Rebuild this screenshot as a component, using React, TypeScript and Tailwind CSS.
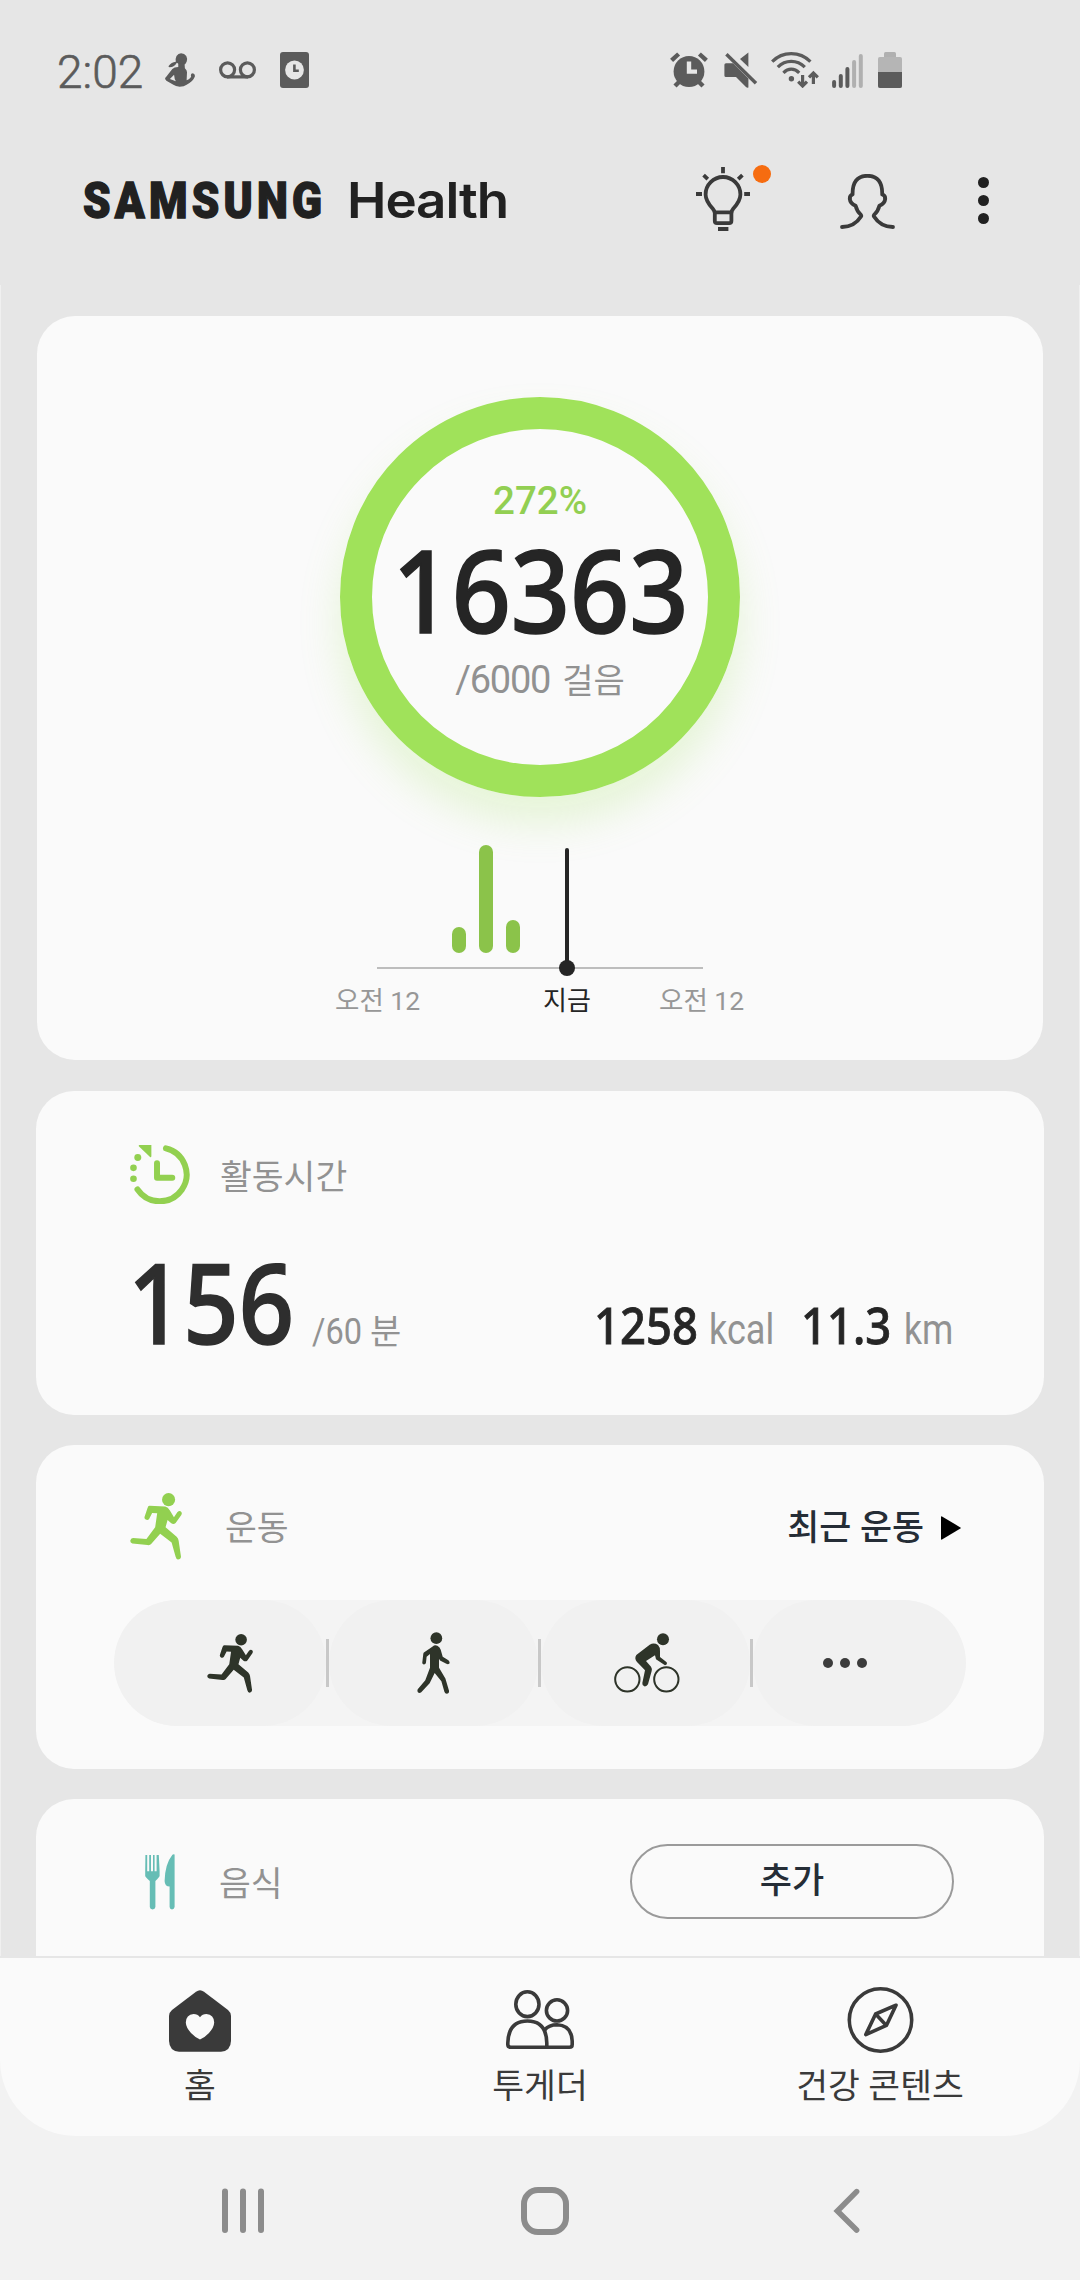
import React from "react";

interface IconProps {
  className?: string;
}

interface StepBar {
  id: number;
  height: number;
}

const stepBars: StepBar[] = [
  { id: 1, height: 26 },
  { id: 2, height: 108 },
  { id: 3, height: 33 },
];

/* Status bar icons */

function CoachIcon({ className }: IconProps) {
  return (
    <svg viewBox="0 0 86 102" preserveAspectRatio="none" className={className} fill="currentColor">
      <path d="M46 1Q56 1 61 9Q65 16 62 26Q60 34 52 36Q40 36 34 29Q28 41 13 43Q8 41 11 38Q18 27 31 26Q29 18 33 9Q38 1 46 1Z" />
      <path
        fillRule="evenodd"
        d="M38 31L56 31L57 46Q64 52 63 60L62 82Q73 78 75 70Q72 61 80 61Q88 64 85 72Q80 86 62 95Q55 101 42 101Q30 100 24 95L4 83Q-3 77 3 72L21 48Q26 42 38 42ZM26 65L14 78L31 85Q27 78 26 65Z"
      />
    </svg>
  );
}

function VoicemailIcon({ className }: IconProps) {
  return (
    <svg viewBox="0 0 37 18" className={className} fill="none" stroke="currentColor" strokeWidth="3.2">
      <circle cx="8.6" cy="8.8" r="7" />
      <circle cx="28.4" cy="8.8" r="7" />
      <path d="M8 15.9H29" />
    </svg>
  );
}

function ClockAppIcon({ className }: IconProps) {
  return (
    <svg viewBox="0 0 29 36" className={className}>
      <rect width="29" height="36" rx="3" fill="#5b5b5b" />
      <circle cx="14.5" cy="18" r="9.4" fill="#e6e6e6" />
      <path d="M14.4 12.5V18.7H18.8" fill="none" stroke="#5b5b5b" strokeWidth="2.6" />
    </svg>
  );
}

function AlarmIcon({ className }: IconProps) {
  return (
    <svg viewBox="0 0 38 36" className={className}>
      <g stroke="#5b5b5b" strokeWidth="4.4">
        <path d="M1.6 8.4L8.6 2" />
        <path d="M36.4 8.4L29.4 2" />
        <path d="M5 34L10 29" />
        <path d="M33 34L28 29" />
      </g>
      <circle cx="19" cy="19.5" r="15.4" fill="#5b5b5b" />
      <path d="M19 9.4V19.6H27" fill="none" stroke="#e6e6e6" strokeWidth="4.4" />
    </svg>
  );
}

function MuteIcon({ className }: IconProps) {
  return (
    <svg viewBox="0 0 34 36" className={className} fill="#5b5b5b">
      <path d="M24.4 0.5V15L16 7Z" />
      <path d="M2 11.2H9L24.4 26.5V35.6Q23 36 22 35L12 25H2Q0.4 25 0.4 23.5V12.8Q0.4 11.2 2 11.2Z" />
      <path d="M2.4 2.2L32 31.2" stroke="#5b5b5b" strokeWidth="3.4" />
    </svg>
  );
}

function WifiIcon({ className }: IconProps) {
  return (
    <svg viewBox="0 0 48 36" className={className} fill="none" stroke="#5b5b5b" strokeWidth="3.2">
      <path d="M1.2 9.6Q9 1.6 20.2 1.6Q31.5 1.6 39.4 9.6" />
      <path d="M6.8 15.2Q12.5 9.3 20.2 9.3Q28 9.3 33.8 15.2" />
      <path d="M12.4 20.8Q16 17.2 20.2 17.2Q24.6 17.2 28.2 20.8" />
      <circle cx="20.4" cy="26.8" r="2.7" fill="#5b5b5b" stroke="none" />
      <path d="M31.6 23V34M27.2 29.6L31.6 34L36 29.6" />
      <path d="M42.4 32V21M38 25.4L42.4 21L46.8 25.4" />
    </svg>
  );
}

function SignalIcon({ className }: IconProps) {
  return (
    <svg viewBox="0 0 31 34" className={className} strokeWidth="4" strokeLinecap="round">
      <g stroke="#5b5b5b">
        <path d="M2.1 28V32" />
        <path d="M8.8 22V32" />
        <path d="M15.4 15V32" />
      </g>
      <g stroke="#b0b0b0">
        <path d="M22.1 8V32" />
        <path d="M28.8 2V32" />
      </g>
    </svg>
  );
}

function BatteryIcon({ className }: IconProps) {
  return (
    <svg viewBox="0 0 24 36" className={className}>
      <rect x="6" width="12" height="8" rx="1.6" fill="#b0b0b0" />
      <rect y="5" width="24" height="31" rx="1.8" fill="#b5b5b5" />
      <path d="M0 20H24V34Q24 36 22 36H2Q0 36 0 34Z" fill="#5b5b5b" />
    </svg>
  );
}

/* App bar icons */

function BulbIcon({ className }: IconProps) {
  return (
    <svg viewBox="0 0 54 64" className={className} fill="none" stroke="#3a3a3a" strokeWidth="3.8">
      <path d="M18.8 45.4Q18.2 43.6 16.4 41.2Q9.6 33.5 9.6 27.4A17.4 17.4 0 0 1 44.4 27.4Q44.4 33.5 37.6 41.2Q35.8 43.6 35.4 45.4Z" />
      <path d="M18.8 45V54Q18.8 56.2 21 56.2H33.2Q35.4 56.2 35.4 54V45" />
      <path d="M22 62H32.4M27 0V6.2M0 27H6M48.2 27H54M7.6 8.2L11.8 12.2M46.4 8.2L42.2 12.2" />
    </svg>
  );
}

function ProfileIcon({ className }: IconProps) {
  return (
    <svg
      viewBox="0 0 55 55"
      className={className}
      fill="none"
      stroke="#3a3a3a"
      strokeWidth="3.8"
      strokeLinecap="round"
      strokeLinejoin="round"
    >
      <path d="M2 53Q14.5 53 21 42.6Q21.6 41.6 20.8 40.6Q17 37.5 15.6 31.8Q10.2 29.4 9.8 25Q9.6 21.4 12.6 20.4Q12.2 1.8 27.4 1.8Q42.6 1.8 42.2 20.4Q45.4 21.4 45.2 25Q44.8 29.4 39.4 31.8Q38 37.5 34.2 40.6Q33.4 41.6 34 42.6Q40.5 53 53 53" />
    </svg>
  );
}

/* Card icons */

function ActiveTimeIcon({ className }: IconProps) {
  return (
    <svg viewBox="0 0 180 178" className={className} fill="#92d050">
      <path
        d="M108 10A81 81 0 1 1 22 134"
        fill="none"
        stroke="#92d050"
        strokeWidth="18"
        strokeLinecap="round"
      />
      <path d="M81 55V99H127" fill="none" stroke="#92d050" strokeWidth="18" strokeLinecap="round" strokeLinejoin="round" />
      <path d="M28 0H64V34Q63 38 60 36L26 4Q25 0 28 0Z" />
      <circle cx="23" cy="38" r="10.5" />
      <circle cx="10" cy="69" r="10" />
      <circle cx="10" cy="102" r="10" />
    </svg>
  );
}

function RunIcon({ className }: IconProps) {
  return (
    <svg viewBox="0 0 155 199" className={className} fill="currentColor">
      <circle cx="115" cy="19.5" r="19.5" />
      <path d="M58 38L105 40Q113 42 119 52L131 72L141 57Q148 50 153 56Q156 60 153 65L136 89Q130 95 123 90L112 80L106 102L139 130Q144 135 145 142L152 190Q151 198 143 198Q138 198 136 190L124 147L90 121L63 152Q60 156 52 155L7 150Q0 147 1 141Q2 135 9 134L49 137L75 102L81 60L66 59L57 77Q53 82 47 79Q43 77 43 72L52 45Q54 38 58 38Z" />
    </svg>
  );
}

function WalkIcon({ className }: IconProps) {
  return (
    <svg viewBox="0 0 97 185" className={className} fill="currentColor">
      <circle cx="57" cy="18.5" r="17.5" />
      <path d="M46 43Q52 38 60 41Q68 45 70 53L76 74L93 84Q98 89 96 94Q92 98 87 95L68 85L65 80L65 107L84 139L95 176Q95 184 88 184Q83 184 81 178L72 147L52 122L37 153L12 180Q6 184 2 180Q-1 175 2 170L24 144L38 107L38 66L28 74L26 92Q25 97 20 97Q15 97 15 92L18 66Q18 62 22 60Z" />
    </svg>
  );
}

function CycleIcon({ className }: IconProps) {
  return (
    <svg viewBox="0 0 198 180" className={className} fill="currentColor">
      <circle cx="147" cy="19" r="18" />
      <path d="M67 66L107 35Q120 28 132 36Q139 43 138 55L138 72L158 88Q161 95 153 97L126 79L123 67L96 84L111 101Q115 107 113 114L102 154Q98 161 91 160Q84 158 85 150L93 112L69 87Q60 76 67 66Z" />
      <g fill="none" stroke="currentColor" strokeWidth="6">
        <circle cx="40" cy="139" r="36.5" />
        <circle cx="157" cy="139" r="36.5" />
      </g>
    </svg>
  );
}

function FoodIcon({ className }: IconProps) {
  return (
    <svg viewBox="0 0 30 56" className={className} fill="#66bdb5">
      <path d="M0.4 1H2.2V17.2H4.2V1H6V17.2H8V1H9.6V17.2H11.6V1H13.8L14.6 17V22Q14.4 23 10.4 27V53Q10.2 55.4 7.6 55.4Q5 55.4 4.8 53V27Q0.4 23 0.2 22V17Z" />
      <path d="M29.6 0.4V53Q29.2 55.4 27 55.4Q24.8 55.4 24.6 53V32.6Q19.8 32.6 19.6 27Q20 10 27.4 0.8Q28.4 -0.2 29.6 0.4Z" />
    </svg>
  );
}

/* Tab icons */

function HomeIcon({ className }: IconProps) {
  return (
    <svg viewBox="0 0 62 62" className={className}>
      <path
        d="M27 1.8Q31 -1.2 35 1.8L59 20Q62 22.6 62 26V51Q61.6 61 52 61.8H10Q0.4 61 0 51V26Q0 22.6 3 20Z"
        fill="#3a3a3a"
      />
      <path
        d="M31 27.2Q33.4 24 37.4 24Q45 24.6 45.2 32.6Q45 37.6 40 43Q36.4 47 31 49.4Q25.6 47 22 43Q17 37.6 16.8 32.6Q17 24.6 24.6 24Q28.6 24 31 27.2Z"
        fill="#fafafa"
      />
    </svg>
  );
}

function TogetherIcon({ className }: IconProps) {
  return (
    <svg viewBox="0 0 68 60" className={className} fill="none" stroke="#3a3a3a" strokeWidth="3.6" strokeLinejoin="round">
      <ellipse cx="21.4" cy="14.2" rx="11.6" ry="12.4" />
      <circle cx="51" cy="20.4" r="10.6" />
      <path d="M1.8 53Q2.4 31 21.4 31Q40.4 31 40.8 53V57.2H4.6Q1.8 57.2 1.8 54.6Z" />
      <path d="M38.6 40Q43 34.8 51 34.8Q65.6 35.4 66.2 51V54.4Q66.2 57.2 63.4 57.2H40" />
    </svg>
  );
}

function CompassIcon({ className }: IconProps) {
  return (
    <svg viewBox="0 0 67 66" className={className} fill="none" stroke="#3a3a3a" strokeWidth="3.6" strokeLinejoin="round">
      <circle cx="33.5" cy="33" r="31.2" />
      <path d="M49 18.2L28.6 27L18.8 47.6L39.4 38.4Z" />
      <path d="M28.6 27L39.4 38.4" />
    </svg>
  );
}

function StatusBar() {
  return (
    <div className="flex h-[140px] items-center pl-[57px] text-[#5b5b5b]">
      <span className="w-[108px] pt-1 text-[46px] leading-none font-light [-webkit-text-stroke:0.6px_#5b5b5b]">
        2:02
      </span>
      <CoachIcon className="h-[34px] w-[30px]" />
      <VoicemailIcon className="ml-6 h-[18px] w-[37px]" />
      <ClockAppIcon className="ml-6 h-9 w-[29px]" />
      <AlarmIcon className="ml-[361px] h-9 w-[38px]" />
      <MuteIcon className="ml-4 h-9 w-[34px]" />
      <WifiIcon className="ml-[13px] h-9 w-12" />
      <SignalIcon className="mt-0.5 ml-[13px] h-[34px] w-[31px]" />
      <BatteryIcon className="ml-[15px] h-9 w-6" />
    </div>
  );
}

function AppBar() {
  return (
    <header className="flex h-[145px] items-start pl-[83px] text-[#212121]">
      <h1 className="flex w-[613px] items-baseline pt-[31px] leading-[60px] whitespace-nowrap">
        <span className="w-[264px]">
          <span className="inline-block origin-left scale-x-[0.88] text-[50px] font-black tracking-[4.8px] [-webkit-text-stroke:1.4px_#212121]">
            SAMSUNG
          </span>
        </span>
        <span className="inline-block origin-left scale-x-[1.08] font-['Inter',sans-serif] text-[49px] font-semibold tracking-[-1px]">
          Health
        </span>
      </h1>
      <button className="relative mt-[27px]">
        <BulbIcon className="h-16 w-[54px]" />
        <span className="absolute -top-[2px] left-[57px] size-[18px] rounded-full bg-[#f66c10]" />
      </button>
      <button className="mt-[34px] ml-[90px]">
        <ProfileIcon className="h-[55px] w-[55px]" />
      </button>
      <button className="mt-[37px] ml-[83px] flex flex-col gap-[7px]">
        <span className="size-[11px] rounded-full bg-[#212121]" />
        <span className="size-[11px] rounded-full bg-[#212121]" />
        <span className="size-[11px] rounded-full bg-[#212121]" />
      </button>
    </header>
  );
}

function StepsCard() {
  return (
    <section className="mx-px flex h-[744px] flex-col items-center rounded-[38px] bg-[#fafafa] pt-[81px]">
      <div className="flex size-[400px] shrink-0 flex-col items-center rounded-full border-[32px] border-[#a0e25a] shadow-[0_26px_40px_rgba(160,226,90,0.22)]">
        <div className="mt-[50px] text-[38.5px] leading-[44px] font-medium text-[#92cf52]">272%</div>
        <div className="mt-[24px] scale-x-[0.9] font-['Noto_Sans',sans-serif] text-[115px] leading-[84px] font-medium text-[#252525] [-webkit-text-stroke:1.6px_#252525]">
          16363
        </div>
        <div className="mt-[25px] flex items-baseline leading-[48px] text-[#919191]">
          <span className="text-[38px] tracking-[-1.2px]">/6000</span>
          <span className="ml-3 text-[34px]">걸음</span>
        </div>
      </div>

      {/* Today's steps by hour */}
      <div className="relative mt-[48px] h-[124px] w-[326px] border-b-2 border-[#bdbdbd]">
        <div className="flex h-[108px] items-end gap-[13px] pl-[75px]">
          {stepBars.map((bar) => (
            <div key={bar.id} className="w-[14px] rounded-full bg-[#8bc34a]" style={{ height: bar.height }} />
          ))}
        </div>
        <div className="absolute top-[3px] left-[188px] h-[120px] w-1 rounded-full bg-[#252525]" />
        <div className="absolute top-[115px] left-[182px] size-[16px] rounded-full bg-[#252525]" />
      </div>
      <div className="mt-[13px] flex w-[410px] text-[26.5px] leading-[38px] text-[#979797]">
        <span className="w-[208px]">오전 12</span>
        <span className="w-[116px] text-[26px] text-[#252525]">지금</span>
        <span className="whitespace-nowrap">오전 12</span>
      </div>
    </section>
  );
}

function ActiveTimeCard() {
  return (
    <section className="flex h-[324px] flex-col rounded-[38px] bg-[#fafafa] pt-[53px] pl-[94px]">
      <div className="flex h-[60px] items-center">
        <ActiveTimeIcon className="h-[59px] w-[60px]" />
        <h2 className="mt-[5px] ml-[30px] text-[34.6px] leading-[60px] text-[#929292]">활동시간</h2>
      </div>
      <div className="mt-[42px] flex items-baseline leading-[110px] whitespace-nowrap">
        <span className="-ml-0.5 w-[184px]">
          <span className="inline-block origin-left scale-x-[0.88] font-['Noto_Sans',sans-serif] text-[110px] font-medium text-[#2e2e2e] [-webkit-text-stroke:1.6px_#2e2e2e]">
            156
          </span>
        </span>
        <span className="flex w-[282px] items-baseline text-[#929292]">
          <span className="w-[58px]">
            <span className="inline-block origin-left scale-x-[0.88] text-[37px]">/60</span>
          </span>
          <span className="text-[34px]">분</span>
        </span>
        <span className="w-[115px]">
          <span className="inline-block origin-left scale-x-[0.89] font-['Noto_Sans',sans-serif] text-[51px] font-medium text-[#252525] [-webkit-text-stroke:0.8px_#252525]">
            1258
          </span>
        </span>
        <span className="w-[92px]">
          <span className="inline-block origin-left scale-x-[0.84] text-[43px] text-[#929292]">kcal</span>
        </span>
        <span className="w-[103px]">
          <span className="inline-block origin-left scale-x-[0.89] font-['Noto_Sans',sans-serif] text-[51px] font-medium text-[#252525] [-webkit-text-stroke:0.8px_#252525]">
            11.3
          </span>
        </span>
        <span className="inline-block origin-left scale-x-[0.83] text-[43px] text-[#929292]">km</span>
      </div>
    </section>
  );
}

function ExerciseCard() {
  return (
    <section className="h-[324px] rounded-[38px] bg-[#fafafa] px-[78px] pt-12">
      <div className="flex h-[67px] items-center pr-[5px] pl-4">
        <RunIcon className="h-[67px] w-[52px] text-[#92d050]" />
        <h2 className="mt-[3px] ml-[43px] text-[34.6px] leading-[60px] text-[#929292]">운동</h2>
        <button className="ml-auto flex items-center text-[34.8px] leading-[60px] font-medium text-[#252d36]">
          <span className="mt-0.5">최근 운동</span>
          <svg viewBox="0 0 20 24" className="mt-0.5 ml-[17px] h-6 w-5">
            <path d="M0 1Q0 0 1 0.4L19.4 11.4Q20.4 12 19.4 12.6L1 23.6Q0 24 0 23Z" fill="#000" />
          </svg>
        </button>
      </div>
      <div className="mt-10 flex h-[126px] items-center overflow-hidden rounded-full bg-[#f4f4f4]">
        <button className="flex h-full w-[212px] items-center justify-center rounded-full bg-[#f1f1f1] pl-[19px]">
          <RunIcon className="h-[59px] w-[46px] text-[#2e3429]" />
        </button>
        <span className="h-12 w-[3px] bg-[#c8c8c8]" />
        <button className="flex h-full w-[209px] items-center justify-center rounded-full bg-[#f1f1f1]">
          <WalkIcon className="h-[62px] w-[33px] text-[#2e3429]" />
        </button>
        <span className="h-12 w-[3px] bg-[#c8c8c8]" />
        <button className="flex h-full w-[209px] items-center justify-center rounded-full bg-[#f1f1f1] pl-0.5">
          <CycleIcon className="h-[60px] w-[66px] text-[#2e3429]" />
        </button>
        <span className="h-12 w-[3px] bg-[#c8c8c8]" />
        <button className="flex h-full w-[213px] items-center gap-[7px] rounded-full bg-[#f1f1f1] pl-[70px]">
          <span className="size-[10px] rounded-full bg-[#3c3c3c]" />
          <span className="size-[10px] rounded-full bg-[#3c3c3c]" />
          <span className="size-[10px] rounded-full bg-[#3c3c3c]" />
        </button>
      </div>
    </section>
  );
}

function FoodCard() {
  return (
    <section className="flex h-[157px] items-start rounded-t-[38px] bg-[#fafafa] pt-[45px] pl-[109px]">
      <FoodIcon className="mt-[10px] h-14 w-[30px]" />
      <h2 className="mt-[10px] ml-[44px] w-[411px] text-[34.6px] leading-[60px] text-[#929292]">음식</h2>
      <button className="h-[75px] w-[324px] rounded-full border-2 border-[#9a9a9a] text-[35px] leading-[69px] font-medium text-[#252d36]">
        추가
      </button>
    </section>
  );
}

function TabBar() {
  return (
    <nav className="flex h-[178px] justify-between rounded-b-[76px] bg-[#fafafa] px-[30px] text-[34.6px] leading-[50px] text-[#3a3a3a]">
      <button className="flex w-[340px] flex-col items-center pt-8">
        <HomeIcon className="h-[62px] w-[62px]" />
        <span className="mt-[9px]">홈</span>
      </button>
      <button className="flex w-[340px] flex-col items-center pt-8">
        <TogetherIcon className="h-[60px] w-[68px]" />
        <span className="mt-[11px]">투게더</span>
      </button>
      <button className="flex w-[340px] flex-col items-center pt-[29px]">
        <CompassIcon className="h-[66px] w-[67px]" />
        <span className="mt-2">건강 콘텐츠</span>
      </button>
    </nav>
  );
}

function SystemBar() {
  return (
    <div className="flex h-[144px] items-start pt-[51px] pl-[222px]">
      <svg viewBox="0 0 42 48" className="h-12 w-[42px]" stroke="#8c8c8c" strokeWidth="6" strokeLinecap="round">
        <path d="M3 4.5V43M21 4.5V43M39 4.5V43" />
      </svg>
      <svg viewBox="0 0 48 48" className="ml-[257px] size-12" fill="none" stroke="#8c8c8c" strokeWidth="6">
        <rect x="3" y="3" width="42" height="42" rx="14" />
      </svg>
      <svg
        viewBox="0 0 28 48"
        className="ml-[264px] h-12 w-7"
        fill="none"
        stroke="#8c8c8c"
        strokeWidth="5.6"
        strokeLinecap="round"
      >
        <path d="M23.6 4.6L4.4 24L23.6 43" />
      </svg>
    </div>
  );
}

function App() {
  return (
    <div className="flex h-[2280px] w-[1080px] flex-col overflow-hidden bg-[#f2f2f2] font-['Roboto','Noto_Sans_CJK_KR',sans-serif]">
      <div className="bg-[#e6e6e6]">
        <StatusBar />
        <AppBar />
        <main className="flex h-[1671px] flex-col border-x border-[#f0f0f0] px-[35px] pt-[31px]">
          <StepsCard />
          <div className="mt-[31px]">
            <ActiveTimeCard />
          </div>
          <div className="mt-[30px]">
            <ExerciseCard />
          </div>
          <div className="mt-[30px]">
            <FoodCard />
          </div>
        </main>
        <div className="h-[2px]" />
      </div>
      <TabBar />
      <SystemBar />
    </div>
  );
}

export default App;
